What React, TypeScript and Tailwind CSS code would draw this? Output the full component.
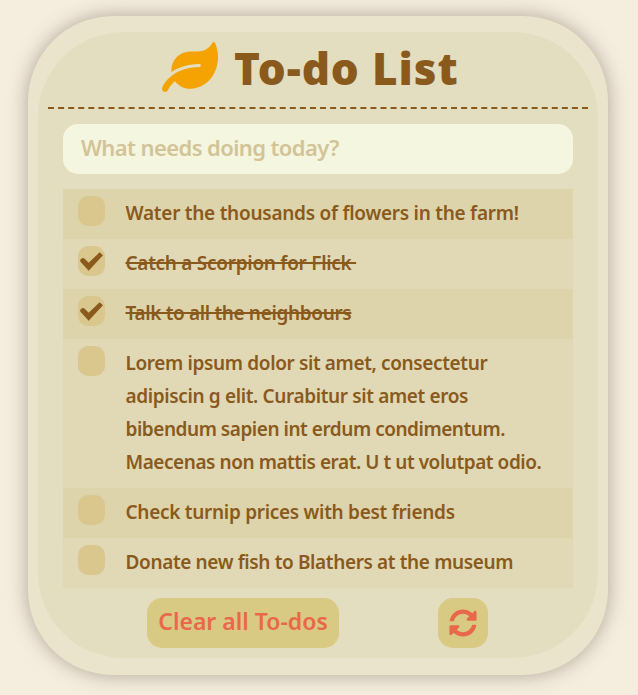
import { FaLeaf, FaSyncAlt } from "react-icons/fa";

type Line = { text: string; spacing: string };
type Todo = { lines: Line[]; done?: boolean };

const todos: Todo[] = [
  { lines: [{ text: "Water the thousands of flowers in the farm!", spacing: "tracking-[-0.26px]" }] },
  { lines: [{ text: "Catch a Scorpion for Flick ", spacing: "tracking-[-0.28px]" }], done: true },
  { lines: [{ text: "Talk to all the neighbours", spacing: "tracking-[-0.35px]" }], done: true },
  {
    lines: [
      { text: "Lorem ipsum dolor sit amet, consectetur", spacing: "tracking-[-0.37px]" },
      { text: "adipiscin g elit. Curabitur sit amet eros", spacing: "tracking-[-0.37px]" },
      { text: "bibendum sapien int erdum condimentum.", spacing: "tracking-[-0.47px]" },
      { text: "Maecenas non mattis erat. U t ut volutpat odio.", spacing: "tracking-[-0.45px]" },
    ],
  },
  { lines: [{ text: "Check turnip prices with best friends", spacing: "tracking-[-0.29px]" }] },
  { lines: [{ text: "Donate new fish to Blathers at the museum", spacing: "tracking-[-0.37px]" }] },
];

function CheckMark() {
  return (
    <svg viewBox="0 0 70 57" className="h-[19px] w-[23.3px] shrink-0" fill="currentColor" aria-hidden="true">
      <path d="M2 30Q-1 26 2 22L6 19Q10 16 14 20L26 32L59 1L69 10L26 56Z" />
    </svg>
  );
}

function TodoRow({ todo }: { todo: Todo }) {
  return (
    <li className="flex items-start px-[15px] pt-[7px] pb-[9px] odd:bg-[#ddd4ab] even:bg-[#e1d9b5]">
      <span className="flex h-[30px] w-[27px] shrink-0 items-center justify-center rounded-[10px] bg-[#d9c78d]">
        {todo.done && <CheckMark />}
      </span>
      <div className="ml-[20.5px] pt-px text-[19px] leading-[33px] font-semibold whitespace-pre">
        {todo.lines.map((line) => (
          <div key={line.text}>
            <span className={`${line.spacing} ${todo.done ? "line-through decoration-2" : ""}`}>{line.text}</span>
          </div>
        ))}
      </div>
    </li>
  );
}

export default function App() {
  return (
    <div className="h-[695px] w-[638px] overflow-hidden bg-[#f5eedf] pt-4 pl-7 font-['Noto_Sans',sans-serif] text-[#8a5a1d]">
      <main className="h-[659px] w-[580px] rounded-[85px] bg-[#eae4cc] px-[10px] pt-4 shadow-[0_0_20px_rgba(80,60,50,0.42)]">
        <div className="h-[626px] rounded-[85px] bg-[#e4dec0] px-[10px]">
          <header className="flex h-[77px] items-start justify-center gap-4 border-b-2 border-dashed border-[#8a5a1d] pt-[10px] pr-4">
            <FaLeaf className="h-[50px] w-[56px] shrink-0 text-[#f5a302]" />
            <h1 className="w-[224px] text-[44px] leading-[53px] font-black tracking-[0.9px] whitespace-nowrap">
              To-do List
            </h1>
          </header>
          <div className="px-[15px] pt-[15px]">
            <input
              className="block h-[50px] w-full rounded-[15px] bg-[#f5f6e0] px-[18px] pb-[5px] text-[22px] font-semibold tracking-[-0.6px] outline-none placeholder:text-[#d2c497]"
              placeholder="What needs doing today?"
            />
            <ul className="mt-[15px]">
              {todos.map((todo) => (
                <TodoRow key={todo.lines[0].text} todo={todo} />
              ))}
            </ul>
          </div>
          <footer className="mt-[10px] flex gap-[99px] pl-[99px] text-[#e9684b]">
            <button className="h-[50px] w-[192px] rounded-[15px] bg-[#d8c983] pb-[3px] text-[23px] font-semibold whitespace-nowrap">
              Clear all To-dos
            </button>
            <button className="flex size-[50px] items-center justify-center rounded-[15px] bg-[#d8c983]">
              <FaSyncAlt className="size-[28px]" />
            </button>
          </footer>
        </div>
      </main>
    </div>
  );
}
